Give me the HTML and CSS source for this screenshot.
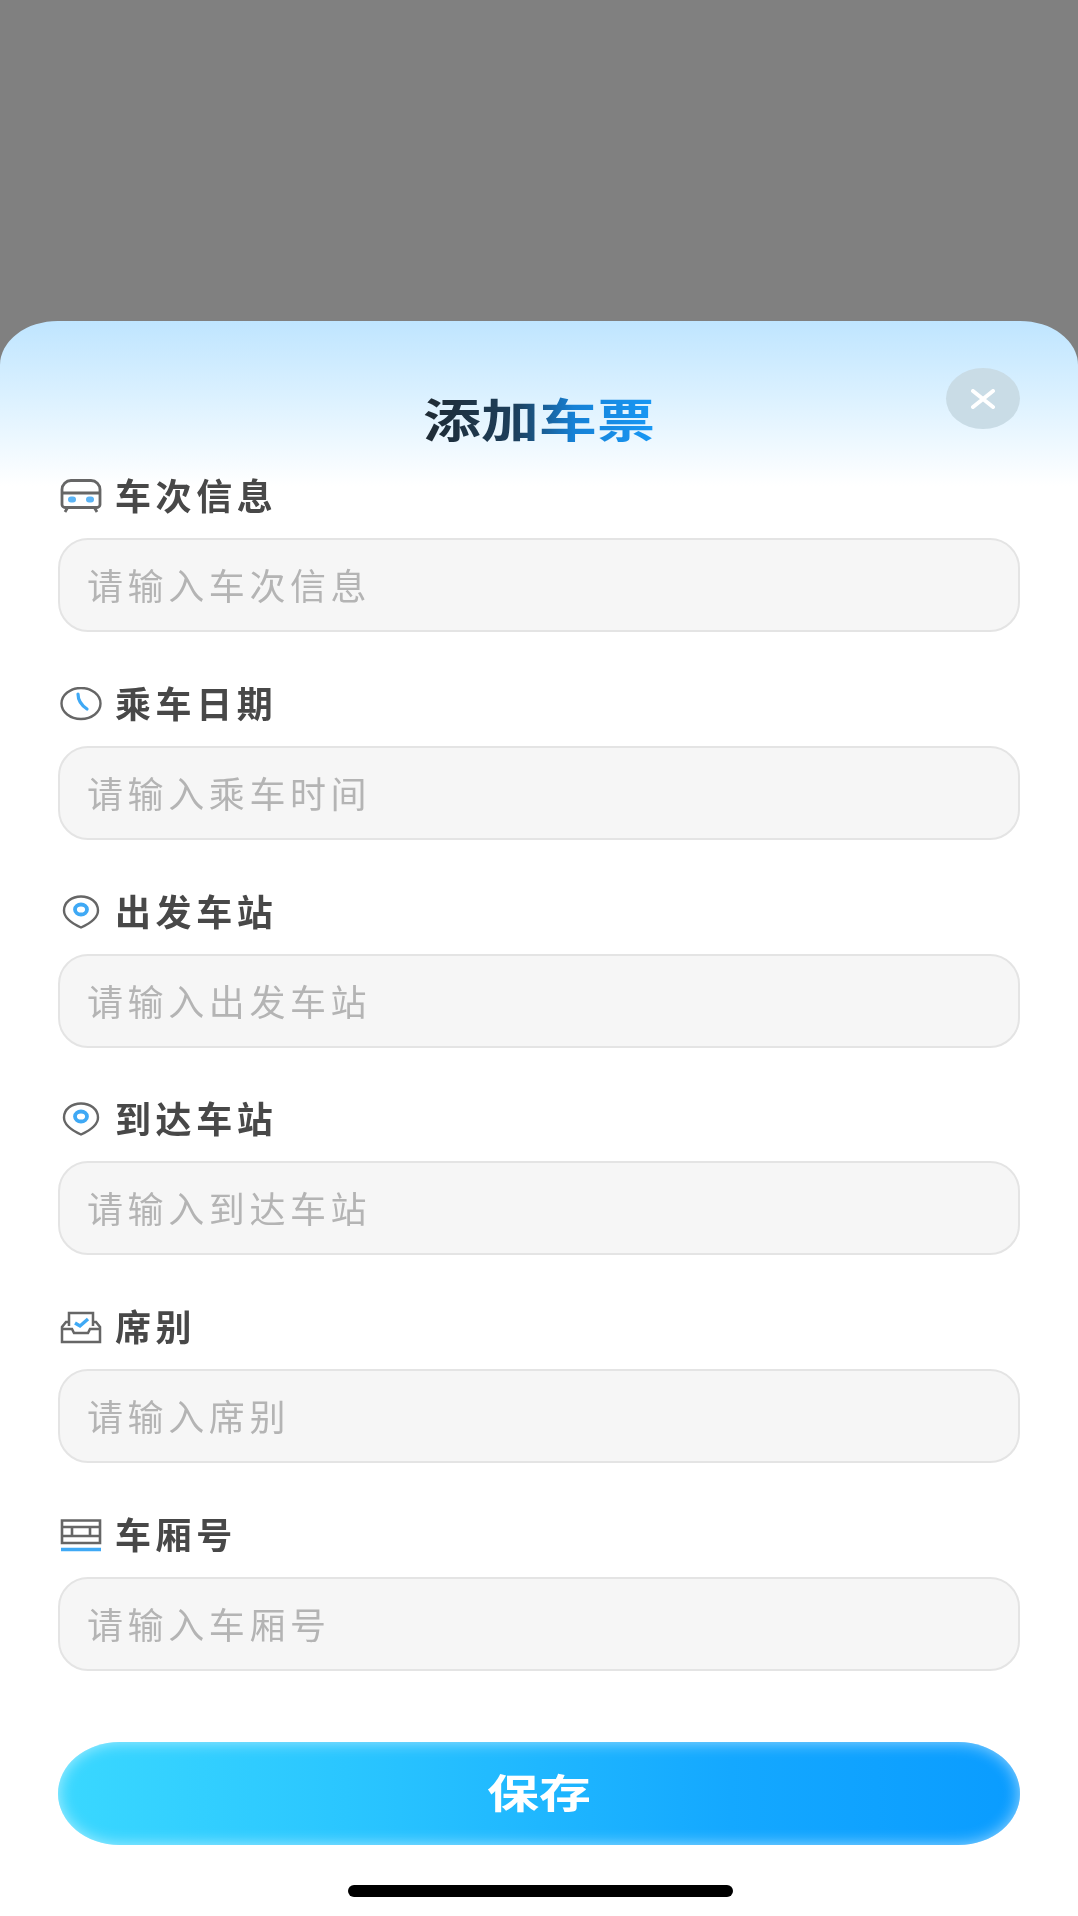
FILE: index.html
```html
<!DOCTYPE html>
<html lang="zh-CN">
<head>
<meta charset="utf-8">
<title>添加车票</title>
<link rel="stylesheet" href="styles.css">
</head>
<body>
<div class="scrim"></div>
<section class="sheet">
  <header class="sheet-head">
    <h1 class="title">添加车票</h1>
    <button class="close" aria-label="关闭">
      <svg viewBox="0 0 26 20" width="26" height="20"><path d="M3 2 23 18M23 2 3 18" fill="none" stroke="#fff" stroke-width="4" stroke-linecap="round"/></svg>
    </button>
  </header>
  <form class="form">
    <div class="row">
      <div class="label">
        <svg class="ico" viewBox="0 0 42 34"><path d="M11 1.500h20a9 9 0 0 1 9 9v15a3 3 0 0 1-3 3H5a3 3 0 0 1-3-3v-15a9 9 0 0 1 9-9ZM2 14h38M8 28l-3 5M34 28l3 5" fill="none" stroke="#666" stroke-width="2.800"/><rect x="8" y="17.500" width="8" height="6" rx="3" fill="#5cb4f5"/><rect x="26" y="17.500" width="8" height="6" rx="3" fill="#5cb4f5"/></svg>
        <span>车次信息</span>
      </div>
      <div class="field"><span>请输入车次信息</span></div>
    </div>
    <div class="row">
      <div class="label">
        <svg class="ico" viewBox="0 0 42 34"><ellipse cx="21" cy="16.500" rx="19.500" ry="15.500" fill="none" stroke="#666" stroke-width="2.400"/><path d="M18 7c0 7 3 11 9 15" fill="none" stroke="#3fa9f5" stroke-width="3.200" stroke-linecap="round"/></svg>
        <span>乘车日期</span>
      </div>
      <div class="field"><span>请输入乘车时间</span></div>
    </div>
    <div class="row">
      <div class="label">
        <svg class="ico" viewBox="0 0 42 34"><path d="M21 32.500C11 28 4 23 4 15.500 4 7 12 1.500 21 1.500S38 7 38 15.500c0 7.500-7 12.500-17 17Z" fill="none" stroke="#666" stroke-width="2.400"/><ellipse cx="21" cy="14.500" rx="6" ry="5" fill="none" stroke="#3fa9f5" stroke-width="3.800"/></svg>
        <span>出发车站</span>
      </div>
      <div class="field"><span>请输入出发车站</span></div>
    </div>
    <div class="row">
      <div class="label">
        <svg class="ico" viewBox="0 0 42 34"><path d="M21 32.500C11 28 4 23 4 15.500 4 7 12 1.500 21 1.500S38 7 38 15.500c0 7.500-7 12.500-17 17Z" fill="none" stroke="#666" stroke-width="2.400"/><ellipse cx="21" cy="14.500" rx="6" ry="5" fill="none" stroke="#3fa9f5" stroke-width="3.800"/></svg>
        <span>到达车站</span>
      </div>
      <div class="field"><span>请输入到达车站</span></div>
    </div>
    <div class="row">
      <div class="label">
        <svg class="ico" viewBox="0 0 42 34"><path d="M9 16V3h24v13M9 12H6l-4 5v15h38V17l-4-5h-3M2 19h10l2 4h14l2-4h10" fill="none" stroke="#666" stroke-width="2.500"/><path d="M15 13l5 3 8-7" fill="none" stroke="#3fa9f5" stroke-width="3.400"/></svg>
        <span>席别</span>
      </div>
      <div class="field"><span>请输入席别</span></div>
    </div>
    <div class="row">
      <div class="label">
        <svg class="ico" viewBox="0 0 42 34"><path d="M2 25V2.500h38V25ZM2 9h38M2 18h38M12 9v9M30 9v9" fill="none" stroke="#666" stroke-width="2.600"/><path d="M1 31.500h40" stroke="#3fa9f5" stroke-width="3.400"/></svg>
        <span>车厢号</span>
      </div>
      <div class="field"><span>请输入车厢号</span></div>
    </div>
  </form>
  <button class="save" type="button"><span>保存</span></button>
  <div class="home-bar"></div>
</section>
</body>
</html>
```
FILE: styles.css
```css
* { box-sizing: border-box; }
html, body { margin: 0; padding: 0; }
body {
  width: 1078px;
  height: 1916px;
  overflow: hidden;
  background: #808080;
  display: flex;
  flex-direction: column;
  font-family: "Noto Sans CJK SC", "Noto Sans", sans-serif;
}
.scrim { height: 321px; flex: none; }
.sheet {
  flex: 1;
  position: relative;
  display: flex;
  flex-direction: column;
  padding: 0 58px;
  border-radius: 58px 58px 0 0 / 44px 44px 0 0;
  background: linear-gradient(#bfe5ff 0, #d9f0ff 70px, #fff 165px) no-repeat, #fff;
  filter: blur(.7px);
}
.sheet-head { height: 158px; display: flex; justify-content: center; }
.title {
  margin: 71px 0 0;
  font-size: 46px;
  line-height: 50px;
  height: 50px;
  font-weight: 700;
  transform: scaleX(1.26);
  background: linear-gradient(90deg, #1f2a33 0, #1d3f5c 40%, #1681d6 65%, #1898f5 100%);
  -webkit-background-clip: text;
  background-clip: text;
  color: transparent;
}
.close {
  position: absolute;
  top: 47px;
  right: 58px;
  width: 74px;
  height: 61px;
  border: 0;
  padding: 0;
  border-radius: 50%;
  background: #c9dce6;
  display: flex;
  align-items: center;
  justify-content: center;
}
.form { display: flex; flex-direction: column; gap: 54.8px; }
.row { display: flex; flex-direction: column; gap: 25px; }
.label {
  height: 34px;
  display: flex;
  align-items: center;
  gap: 13px;
  padding-left: 2px;
  font-size: 36px;
  font-weight: 700;
  letter-spacing: 4.6px;
  color: #484848;
}
.label span { margin-bottom: 4px; }
.ico { width: 42px; height: 34px; flex: none; }
.field {
  height: 94px;
  display: flex;
  align-items: center;
  padding: 0 27px;
  border: 2px solid #e4e4e4;
  border-radius: 30px;
  background: #f6f6f6;
  font-size: 36px;
  letter-spacing: 4.6px;
  color: #b4b4b4;
}
.field span { margin-bottom: 2px; }
.save {
  margin-top: 71px;
  height: 103px;
  flex: none;
  border: 0;
  border-radius: 62px / 52px;
  background: linear-gradient(90deg, #3ad8ff 0, #2ac6ff 30%, #14a8ff 70%, #0a9cff 100%);
  box-shadow: inset 0 0 16px rgba(255,255,255,.6);
  color: #fff;
  font-family: inherit;
  font-size: 40px;
  font-weight: 700;
  display: flex;
  align-items: center;
  justify-content: center;
}
.save span { display: block; margin-bottom: 4px; transform: scaleX(1.3); }
.home-bar {
  width: 385px;
  height: 12px;
  margin: 40px 0 0 290px;
  border-radius: 6px;
  background: #000;
}
```
